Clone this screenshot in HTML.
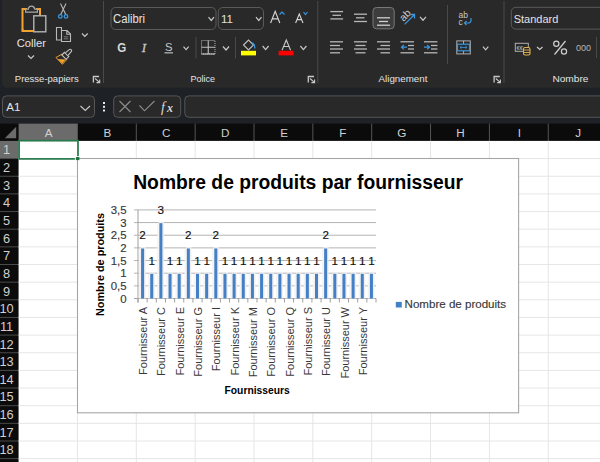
<!DOCTYPE html><html><head><meta charset="utf-8"><style>html,body{margin:0;padding:0;width:600px;height:462px;overflow:hidden;background:#1e2226;}svg{display:block;font-family:"Liberation Sans",sans-serif;}</style></head><body>
<svg width="600" height="462" viewBox="0 0 600 462">
<rect x="0" y="0" width="600" height="462" fill="#1e2226"/>
<rect x="2" y="-10" width="700" height="97.7" rx="5" fill="#292929"/>
<g stroke="#4a4a4a" stroke-width="1">
<line x1="103.5" y1="1" x2="103.5" y2="83"/>
<line x1="317.8" y1="1" x2="317.8" y2="83"/>
<line x1="504" y1="1" x2="504" y2="83"/>
<line x1="196" y1="37" x2="196" y2="58.5"/>
<line x1="235.5" y1="37" x2="235.5" y2="58.5"/>
<line x1="447.5" y1="5" x2="447.5" y2="64"/>
<line x1="596.5" y1="37" x2="596.5" y2="58"/>
</g>
<g fill="#e4e4e4" font-size="9.9">
<text x="14.8" y="82.4" textLength="64" lengthAdjust="spacingAndGlyphs">Presse-papiers</text>
<text x="190.5" y="82.4" textLength="24.6" lengthAdjust="spacingAndGlyphs">Police</text>
<text x="378.6" y="82.4" textLength="48.8" lengthAdjust="spacingAndGlyphs">Alignement</text>
<text x="552.4" y="82.4" textLength="36" lengthAdjust="spacingAndGlyphs">Nombre</text>
</g>
<path d="M22.5,30 V9 H27 M36 9 H40 V16" fill="none" stroke="#f2a32f" stroke-width="2"/>
<path d="M22.5,29 V31 H34" fill="none" stroke="#f2a32f" stroke-width="2"/>
<path d="M25.6,12.2 V9.2 H28.4 A3.1,3.1 0 0 1 34.6,9.2 H37.4 V12.2 Z" fill="#292929" stroke="#a8a8a8" stroke-width="1.2"/>
<rect x="33.8" y="15.8" width="12" height="16" fill="#292929" stroke="#b4b4b4" stroke-width="1.4"/>
<text x="16.7" y="47.3" font-size="11.2" fill="#e4e4e4" textLength="29.3" lengthAdjust="spacingAndGlyphs">Coller</text>
<polyline points="28.00,55.50 31.00,58.50 34.00,55.50" fill="none" stroke="#c8c8c8" stroke-width="1.2"/>
<path d="M60.5,3.5 L66,15 M66,3.5 L60.5,15" fill="none" stroke="#b8b8b8" stroke-width="1.1"/>
<circle cx="60.3" cy="16.4" r="1.8" fill="none" stroke="#3a96dd" stroke-width="1.3"/>
<circle cx="66" cy="16.4" r="1.8" fill="none" stroke="#3a96dd" stroke-width="1.3"/>
<path d="M61,40 H56.5 V27.5 H61.5 V30.5" fill="none" stroke="#b8b8b8" stroke-width="1.1"/>
<path d="M61.5,30.5 H67 L70.5,34 V41.5 H61.5 Z M66.8,30.5 V34.2 H70.5" fill="#292929" stroke="#b8b8b8" stroke-width="1.1"/>
<path d="M63.8,36.8 H68.2 M63.8,38.8 H68.2" stroke="#a0a0a0" stroke-width="0.7"/>
<polyline points="82.00,33.50 84.85,36.40 87.70,33.50" fill="none" stroke="#c8c8c8" stroke-width="1.2"/>
<path d="M56,57.5 L61.8,54.2 L67,59.2 L62.4,64.3 Z" fill="none" stroke="#f2a32f" stroke-width="1"/>
<path d="M57.8,59 L65.6,59.6 L62.3,63.6 Z" fill="#f2a32f"/>
<path d="M61.8,55 L64.5,52.3 L68.8,56.6 L66.1,59.3 Z" fill="#292929" stroke="#c4c4c4" stroke-width="1.1"/>
<path d="M65.6,52.6 L69.2,49.6 A1.3,1.3 0 0 1 71.2,51.6 L68.2,55.2" fill="#292929" stroke="#c4c4c4" stroke-width="1.1"/>
<path d="M92.90,76.50 H99.10 M93.40,76.00 V82.40" fill="none" stroke="#c8c8c8" stroke-width="1.3"/>
<path d="M95.10,78.50 L99.50,82.40 M99.70,79.40 V82.60 H96.50" fill="none" stroke="#c8c8c8" stroke-width="1.1"/>
<rect x="111.0" y="7.5" width="105.0" height="22" rx="4.5" fill="none" stroke="#5a5a5a" stroke-width="1"/>
<rect x="218.3" y="7.5" width="45.2" height="22" rx="4.5" fill="none" stroke="#5a5a5a" stroke-width="1"/>
<text x="113" y="23.1" font-size="12" fill="#e4e4e4" textLength="32" lengthAdjust="spacingAndGlyphs">Calibri</text>
<polyline points="208.50,17.20 211.25,20.50 214.00,17.20" fill="none" stroke="#c8c8c8" stroke-width="1.2"/>
<text x="221" y="23" font-size="11.5" fill="#e0e0e0">11</text>
<polyline points="256.00,17.20 258.75,20.50 261.50,17.20" fill="none" stroke="#c8c8c8" stroke-width="1.2"/>
<path d="M270.6,23 L275.2,11.3 L279.8,23 M272.3,18.8 H278.1" fill="none" stroke="#d4d4d4" stroke-width="1.15"/>
<polyline points="279.5,14.5 282,12 284.5,14.5" fill="none" stroke="#3a96dd" stroke-width="1.2"/>
<path d="M295.6,23 L299.3,14 L303,23 M297,19.6 H301.6" fill="none" stroke="#d4d4d4" stroke-width="1.1"/>
<polyline points="303.5,12 305.5,14.5 307.5,12" fill="none" stroke="#3a96dd" stroke-width="1.2"/>
<text x="117.2" y="51.7" font-size="12.5" font-weight="bold" fill="#d8d8d8" textLength="9" lengthAdjust="spacingAndGlyphs">G</text>
<text x="141.8" y="51.7" font-size="13" font-style="italic" fill="#c8c8c8" stroke="#c8c8c8" stroke-width="0.3" font-family="Liberation Serif">I</text>
<text x="165" y="51" font-size="11.5" fill="#c8c8c8" textLength="7.5" lengthAdjust="spacingAndGlyphs">S</text>
<rect x="164.5" y="52.3" width="8.5" height="1.1" fill="#c8c8c8"/>
<polyline points="183.50,46.70 186.10,49.70 188.70,46.70" fill="none" stroke="#c8c8c8" stroke-width="1.2"/>
<rect x="201.5" y="40.5" width="13.5" height="13.5" fill="none" stroke="#b0b0b0" stroke-width="1" stroke-dasharray="1,1"/>
<path d="M208.25,40.5 V54 M201.5,47.25 H215" stroke="#c0c0c0" stroke-width="1.1"/>
<path d="M201.5,54 H215" stroke="#c8c8c8" stroke-width="1.1"/>
<polyline points="223.00,46.50 226.00,50.00 229.00,46.50" fill="none" stroke="#c8c8c8" stroke-width="1.2"/>
<path d="M243.5,45 L248.5,40 L253.5,45 L248.5,50 Z" fill="none" stroke="#c0c0c0" stroke-width="1.1"/>
<path d="M252,43 Q255,44 254.8,48.5" fill="none" stroke="#3a96dd" stroke-width="1.4"/>
<rect x="241" y="50.8" width="15" height="4.6" fill="#ffff00"/>
<polyline points="262.60,46.00 265.60,49.60 268.60,46.00" fill="none" stroke="#c8c8c8" stroke-width="1.2"/>
<path d="M282,50.2 L286.3,40 L290.6,50.2 M283.6,46.5 H289" fill="none" stroke="#c8c8c8" stroke-width="1.1"/>
<rect x="278.6" y="50.8" width="15" height="4.6" fill="#ff0000"/>
<polyline points="300.40,46.00 303.40,49.60 306.40,46.00" fill="none" stroke="#c8c8c8" stroke-width="1.2"/>
<path d="M307.80,76.50 H314.00 M308.30,76.00 V82.40" fill="none" stroke="#c8c8c8" stroke-width="1.3"/>
<path d="M310.00,78.50 L314.40,82.40 M314.60,79.40 V82.60 H311.40" fill="none" stroke="#c8c8c8" stroke-width="1.1"/>
<line x1="330.3" y1="11.6" x2="343.1" y2="11.6" stroke="#b8b8b8" stroke-width="1.3"/>
<line x1="332.5" y1="15.3" x2="341.0" y2="15.3" stroke="#b8b8b8" stroke-width="1.3"/>
<line x1="330.3" y1="18.9" x2="343.1" y2="18.9" stroke="#b8b8b8" stroke-width="1.3"/>
<line x1="354.0" y1="14.2" x2="367.0" y2="14.2" stroke="#b8b8b8" stroke-width="1.3"/>
<line x1="356.0" y1="17.8" x2="364.5" y2="17.8" stroke="#b8b8b8" stroke-width="1.3"/>
<line x1="354.0" y1="21.5" x2="367.0" y2="21.5" stroke="#b8b8b8" stroke-width="1.3"/>
<rect x="373" y="7.5" width="21.2" height="21.3" rx="3.5" fill="#3d3d3d" stroke="#787878" stroke-width="1"/>
<line x1="377.0" y1="17.8" x2="390.0" y2="17.8" stroke="#d0d0d0" stroke-width="1.3"/>
<line x1="379.0" y1="21.5" x2="388.0" y2="21.5" stroke="#d0d0d0" stroke-width="1.3"/>
<line x1="377.0" y1="25.2" x2="390.0" y2="25.2" stroke="#d0d0d0" stroke-width="1.3"/>
<text transform="translate(403.4,21.9) rotate(-45)" font-size="10.5" fill="#c8c8c8">ab</text>
<path d="M404.6,24.4 L414.5,14.5 M410.5,14.5 H414.5 V18.5" fill="none" stroke="#3a96dd" stroke-width="1.3"/>
<polyline points="420.00,16.90 423.00,20.25 426.00,16.90" fill="none" stroke="#c8c8c8" stroke-width="1.2"/>
<line x1="330.0" y1="41.8" x2="343.0" y2="41.8" stroke="#b8b8b8" stroke-width="1.3"/>
<line x1="330.0" y1="45.5" x2="340.0" y2="45.5" stroke="#b8b8b8" stroke-width="1.3"/>
<line x1="330.0" y1="49.0" x2="343.0" y2="49.0" stroke="#b8b8b8" stroke-width="1.3"/>
<line x1="330.0" y1="52.8" x2="340.0" y2="52.8" stroke="#b8b8b8" stroke-width="1.3"/>
<line x1="354.0" y1="41.8" x2="367.0" y2="41.8" stroke="#b8b8b8" stroke-width="1.3"/>
<line x1="355.5" y1="45.5" x2="365.5" y2="45.5" stroke="#b8b8b8" stroke-width="1.3"/>
<line x1="354.0" y1="49.0" x2="367.0" y2="49.0" stroke="#b8b8b8" stroke-width="1.3"/>
<line x1="355.5" y1="52.8" x2="365.5" y2="52.8" stroke="#b8b8b8" stroke-width="1.3"/>
<line x1="377.0" y1="41.8" x2="390.0" y2="41.8" stroke="#b8b8b8" stroke-width="1.3"/>
<line x1="380.5" y1="45.5" x2="390.0" y2="45.5" stroke="#b8b8b8" stroke-width="1.3"/>
<line x1="377.0" y1="49.0" x2="390.0" y2="49.0" stroke="#b8b8b8" stroke-width="1.3"/>
<line x1="380.5" y1="52.8" x2="390.0" y2="52.8" stroke="#b8b8b8" stroke-width="1.3"/>
<line x1="400.5" y1="41.8" x2="414.0" y2="41.8" stroke="#b8b8b8" stroke-width="1.3"/>
<line x1="408.0" y1="45.5" x2="414.0" y2="45.5" stroke="#b8b8b8" stroke-width="1.3"/>
<line x1="408.0" y1="49.0" x2="414.0" y2="49.0" stroke="#b8b8b8" stroke-width="1.3"/>
<line x1="400.5" y1="52.8" x2="414.0" y2="52.8" stroke="#b8b8b8" stroke-width="1.3"/>
<path d="M407,47.2 H401.5 M403.8,45 L401.5,47.2 L403.8,49.4" fill="none" stroke="#3a96dd" stroke-width="1.2"/>
<line x1="424.0" y1="41.8" x2="437.4" y2="41.8" stroke="#b8b8b8" stroke-width="1.3"/>
<line x1="431.0" y1="45.5" x2="437.4" y2="45.5" stroke="#b8b8b8" stroke-width="1.3"/>
<line x1="431.0" y1="49.0" x2="437.4" y2="49.0" stroke="#b8b8b8" stroke-width="1.3"/>
<line x1="424.0" y1="52.8" x2="437.4" y2="52.8" stroke="#b8b8b8" stroke-width="1.3"/>
<path d="M424,47.2 H429.5 M427.2,45 L429.5,47.2 L427.2,49.4" fill="none" stroke="#3a96dd" stroke-width="1.2"/>
<text x="458.5" y="18" font-size="8.5" fill="#c8c8c8">ab</text>
<text x="458.5" y="24.5" font-size="8.5" fill="#c8c8c8">c</text>
<path d="M471,18 V20.5 Q471,23 468,23 H464.5 M466.5,21 L464.5,23 L466.5,25" fill="none" stroke="#3a96dd" stroke-width="1.2"/>
<rect x="456.8" y="40.9" width="13.5" height="13" fill="none" stroke="#b0b0b0" stroke-width="1"/>
<path d="M463.55,40.9 V44 M463.55,50.8 V53.9" stroke="#b0b0b0" stroke-width="1"/>
<rect x="457.5" y="44.2" width="12" height="6.6" fill="none" stroke="#3a96dd" stroke-width="1.2"/>
<path d="M460,47.4 H467 M461.6,45.9 L460,47.4 L461.6,48.9 M465.4,45.9 L467,47.4 L465.4,48.9" fill="none" stroke="#3a96dd" stroke-width="0.9"/>
<polyline points="483.00,46.70 485.65,49.90 488.30,46.70" fill="none" stroke="#c8c8c8" stroke-width="1.2"/>
<path d="M493.60,76.50 H499.80 M494.10,76.00 V82.40" fill="none" stroke="#c8c8c8" stroke-width="1.3"/>
<path d="M495.80,78.50 L500.20,82.40 M500.40,79.40 V82.60 H497.20" fill="none" stroke="#c8c8c8" stroke-width="1.1"/>
<rect x="511.3" y="7.3" width="200" height="21.8" rx="4.5" fill="none" stroke="#5a5a5a" stroke-width="1"/>
<text x="513.7" y="23" font-size="11.6" fill="#e4e4e4" textLength="44.6" lengthAdjust="spacingAndGlyphs">Standard</text>
<rect x="515.3" y="43.3" width="13" height="8" fill="none" stroke="#b0b0b0" stroke-width="1"/>
<text x="516.5" y="50" font-size="6" fill="#b0b0b0">€€</text>
<rect x="523.5" y="47.5" width="6.5" height="7.5" rx="1.5" fill="#292929" stroke="#e0b050" stroke-width="1.1"/>
<path d="M523.5,50 H530 M523.5,52.5 H530" stroke="#e0b050" stroke-width="0.9"/>
<polyline points="537.00,47.00 539.75,49.50 542.50,47.00" fill="none" stroke="#c8c8c8" stroke-width="1.2"/>
<circle cx="556.3" cy="43.8" r="2.6" fill="none" stroke="#d0d0d0" stroke-width="1.2"/>
<circle cx="564" cy="51.5" r="2.6" fill="none" stroke="#d0d0d0" stroke-width="1.2"/>
<path d="M565.5,41 L554.5,54.5" stroke="#d0d0d0" stroke-width="1.2"/>
<text x="576" y="50.7" font-size="9" fill="#b8b8b8" textLength="15" lengthAdjust="spacingAndGlyphs">000</text>
<text x="552" y="82.7" font-size="9.4" fill="#e4e4e4"></text>
<rect x="2.5" y="95.9" width="92" height="21.4" rx="4" fill="#292929" stroke="#555" stroke-width="1"/>
<rect x="113.7" y="95.9" width="67" height="21.4" rx="4" fill="#292929" stroke="#555" stroke-width="1"/>
<rect x="184.8" y="95.9" width="500" height="21.4" rx="4" fill="#292929" stroke="#555" stroke-width="1"/>
<text x="6.3" y="111.2" fill="#e4e4e4" font-size="11.5">A1</text>
<polyline points="80.50,106.00 85.25,110.50 90.00,106.00" fill="none" stroke="#c8c8c8" stroke-width="1.1"/>
<rect x="103" y="102.0" width="2" height="2" fill="#e8e8e8"/>
<rect x="103" y="105.8" width="2" height="2" fill="#e8e8e8"/>
<rect x="103" y="109.5" width="2" height="2" fill="#e8e8e8"/>
<path d="M119.5,101 L130.5,112 M130.5,101 L119.5,112" stroke="#8c8c8c" stroke-width="1.1"/>
<path d="M139.5,105.5 L144.5,110.8 L154.5,101" fill="none" stroke="#8c8c8c" stroke-width="1.1"/>
<text x="161" y="112" font-size="14" font-style="italic" font-family="Liberation Serif" fill="#d8d8d8">f</text>
<text x="167" y="112" font-size="12" font-style="italic" font-family="Liberation Serif" fill="#d8d8d8" font-weight="bold">x</text>
<rect x="0" y="123.6" width="600" height="17.30000000000001" fill="#0b0b0b"/>
<rect x="18.6" y="123.6" width="58.85" height="17.30000000000001" fill="#6b6b6b"/>
<polygon points="16.2,126.7 16.2,138.2 4.8,138.2" fill="#6b6b6b"/>
<rect x="0" y="140.9" width="18.6" height="400" fill="#0b0b0b"/>
<rect x="0" y="140.9" width="18.6" height="17.69999999999999" fill="#6b6b6b"/>
<line x1="77.45" y1="123.6" x2="77.45" y2="140.9" stroke="#555555" stroke-width="1"/>
<line x1="136.30" y1="123.6" x2="136.30" y2="140.9" stroke="#555555" stroke-width="1"/>
<line x1="195.15" y1="123.6" x2="195.15" y2="140.9" stroke="#555555" stroke-width="1"/>
<line x1="254.00" y1="123.6" x2="254.00" y2="140.9" stroke="#555555" stroke-width="1"/>
<line x1="312.85" y1="123.6" x2="312.85" y2="140.9" stroke="#555555" stroke-width="1"/>
<line x1="371.70" y1="123.6" x2="371.70" y2="140.9" stroke="#555555" stroke-width="1"/>
<line x1="430.55" y1="123.6" x2="430.55" y2="140.9" stroke="#555555" stroke-width="1"/>
<line x1="489.40" y1="123.6" x2="489.40" y2="140.9" stroke="#555555" stroke-width="1"/>
<line x1="548.25" y1="123.6" x2="548.25" y2="140.9" stroke="#555555" stroke-width="1"/>
<line x1="607.10" y1="123.6" x2="607.10" y2="140.9" stroke="#555555" stroke-width="1"/>
<text x="48.63" y="136.7" fill="#d0d0d0" font-size="11.7" text-anchor="middle">A</text>
<text x="107.47" y="136.7" fill="#d0d0d0" font-size="11.7" text-anchor="middle">B</text>
<text x="166.32" y="136.7" fill="#d0d0d0" font-size="11.7" text-anchor="middle">C</text>
<text x="225.17" y="136.7" fill="#d0d0d0" font-size="11.7" text-anchor="middle">D</text>
<text x="284.03" y="136.7" fill="#d0d0d0" font-size="11.7" text-anchor="middle">E</text>
<text x="342.88" y="136.7" fill="#d0d0d0" font-size="11.7" text-anchor="middle">F</text>
<text x="401.73" y="136.7" fill="#d0d0d0" font-size="11.7" text-anchor="middle">G</text>
<text x="460.58" y="136.7" fill="#d0d0d0" font-size="11.7" text-anchor="middle">H</text>
<text x="519.43" y="136.7" fill="#d0d0d0" font-size="11.7" text-anchor="middle">I</text>
<text x="578.28" y="136.7" fill="#d0d0d0" font-size="11.7" text-anchor="middle">J</text>
<text x="6.6" y="154.37" fill="#d0d0d0" font-size="12.8" text-anchor="middle">1</text>
<line x1="0" y1="158.60" x2="18.6" y2="158.60" stroke="#4a4a4a" stroke-width="1"/>
<text x="6.6" y="172.02" fill="#d0d0d0" font-size="12.8" text-anchor="middle">2</text>
<line x1="0" y1="176.25" x2="18.6" y2="176.25" stroke="#4a4a4a" stroke-width="1"/>
<text x="6.6" y="189.67" fill="#d0d0d0" font-size="12.8" text-anchor="middle">3</text>
<line x1="0" y1="193.90" x2="18.6" y2="193.90" stroke="#4a4a4a" stroke-width="1"/>
<text x="6.6" y="207.32" fill="#d0d0d0" font-size="12.8" text-anchor="middle">4</text>
<line x1="0" y1="211.55" x2="18.6" y2="211.55" stroke="#4a4a4a" stroke-width="1"/>
<text x="6.6" y="224.97" fill="#d0d0d0" font-size="12.8" text-anchor="middle">5</text>
<line x1="0" y1="229.20" x2="18.6" y2="229.20" stroke="#4a4a4a" stroke-width="1"/>
<text x="6.6" y="242.62" fill="#d0d0d0" font-size="12.8" text-anchor="middle">6</text>
<line x1="0" y1="246.85" x2="18.6" y2="246.85" stroke="#4a4a4a" stroke-width="1"/>
<text x="6.6" y="260.27" fill="#d0d0d0" font-size="12.8" text-anchor="middle">7</text>
<line x1="0" y1="264.50" x2="18.6" y2="264.50" stroke="#4a4a4a" stroke-width="1"/>
<text x="6.6" y="277.93" fill="#d0d0d0" font-size="12.8" text-anchor="middle">8</text>
<line x1="0" y1="282.15" x2="18.6" y2="282.15" stroke="#4a4a4a" stroke-width="1"/>
<text x="6.6" y="295.57" fill="#d0d0d0" font-size="12.8" text-anchor="middle">9</text>
<line x1="0" y1="299.80" x2="18.6" y2="299.80" stroke="#4a4a4a" stroke-width="1"/>
<text x="6.6" y="313.22" fill="#d0d0d0" font-size="12.8" text-anchor="middle">10</text>
<line x1="0" y1="317.45" x2="18.6" y2="317.45" stroke="#4a4a4a" stroke-width="1"/>
<text x="6.6" y="330.88" fill="#d0d0d0" font-size="12.8" text-anchor="middle">11</text>
<line x1="0" y1="335.10" x2="18.6" y2="335.10" stroke="#4a4a4a" stroke-width="1"/>
<text x="6.6" y="348.53" fill="#d0d0d0" font-size="12.8" text-anchor="middle">12</text>
<line x1="0" y1="352.75" x2="18.6" y2="352.75" stroke="#4a4a4a" stroke-width="1"/>
<text x="6.6" y="366.18" fill="#d0d0d0" font-size="12.8" text-anchor="middle">13</text>
<line x1="0" y1="370.40" x2="18.6" y2="370.40" stroke="#4a4a4a" stroke-width="1"/>
<text x="6.6" y="383.82" fill="#d0d0d0" font-size="12.8" text-anchor="middle">14</text>
<line x1="0" y1="388.05" x2="18.6" y2="388.05" stroke="#4a4a4a" stroke-width="1"/>
<text x="6.6" y="401.47" fill="#d0d0d0" font-size="12.8" text-anchor="middle">15</text>
<line x1="0" y1="405.70" x2="18.6" y2="405.70" stroke="#4a4a4a" stroke-width="1"/>
<text x="6.6" y="419.12" fill="#d0d0d0" font-size="12.8" text-anchor="middle">16</text>
<line x1="0" y1="423.35" x2="18.6" y2="423.35" stroke="#4a4a4a" stroke-width="1"/>
<text x="6.6" y="436.78" fill="#d0d0d0" font-size="12.8" text-anchor="middle">17</text>
<line x1="0" y1="441.00" x2="18.6" y2="441.00" stroke="#4a4a4a" stroke-width="1"/>
<text x="6.6" y="454.43" fill="#d0d0d0" font-size="12.8" text-anchor="middle">18</text>
<line x1="0" y1="458.65" x2="18.6" y2="458.65" stroke="#4a4a4a" stroke-width="1"/>
<text x="6.6" y="472.07" fill="#d0d0d0" font-size="12.8" text-anchor="middle">19</text>
<rect x="18.6" y="140.9" width="600" height="400" fill="#ffffff"/>
<line x1="77.45" y1="140.9" x2="77.45" y2="462" stroke="#e6e6e6" stroke-width="1"/>
<line x1="136.30" y1="140.9" x2="136.30" y2="462" stroke="#e6e6e6" stroke-width="1"/>
<line x1="195.15" y1="140.9" x2="195.15" y2="462" stroke="#e6e6e6" stroke-width="1"/>
<line x1="254.00" y1="140.9" x2="254.00" y2="462" stroke="#e6e6e6" stroke-width="1"/>
<line x1="312.85" y1="140.9" x2="312.85" y2="462" stroke="#e6e6e6" stroke-width="1"/>
<line x1="371.70" y1="140.9" x2="371.70" y2="462" stroke="#e6e6e6" stroke-width="1"/>
<line x1="430.55" y1="140.9" x2="430.55" y2="462" stroke="#e6e6e6" stroke-width="1"/>
<line x1="489.40" y1="140.9" x2="489.40" y2="462" stroke="#e6e6e6" stroke-width="1"/>
<line x1="548.25" y1="140.9" x2="548.25" y2="462" stroke="#e6e6e6" stroke-width="1"/>
<line x1="607.10" y1="140.9" x2="607.10" y2="462" stroke="#e6e6e6" stroke-width="1"/>
<line x1="18.6" y1="158.60" x2="600" y2="158.60" stroke="#e6e6e6" stroke-width="1"/>
<line x1="18.6" y1="176.25" x2="600" y2="176.25" stroke="#e6e6e6" stroke-width="1"/>
<line x1="18.6" y1="193.90" x2="600" y2="193.90" stroke="#e6e6e6" stroke-width="1"/>
<line x1="18.6" y1="211.55" x2="600" y2="211.55" stroke="#e6e6e6" stroke-width="1"/>
<line x1="18.6" y1="229.20" x2="600" y2="229.20" stroke="#e6e6e6" stroke-width="1"/>
<line x1="18.6" y1="246.85" x2="600" y2="246.85" stroke="#e6e6e6" stroke-width="1"/>
<line x1="18.6" y1="264.50" x2="600" y2="264.50" stroke="#e6e6e6" stroke-width="1"/>
<line x1="18.6" y1="282.15" x2="600" y2="282.15" stroke="#e6e6e6" stroke-width="1"/>
<line x1="18.6" y1="299.80" x2="600" y2="299.80" stroke="#e6e6e6" stroke-width="1"/>
<line x1="18.6" y1="317.45" x2="600" y2="317.45" stroke="#e6e6e6" stroke-width="1"/>
<line x1="18.6" y1="335.10" x2="600" y2="335.10" stroke="#e6e6e6" stroke-width="1"/>
<line x1="18.6" y1="352.75" x2="600" y2="352.75" stroke="#e6e6e6" stroke-width="1"/>
<line x1="18.6" y1="370.40" x2="600" y2="370.40" stroke="#e6e6e6" stroke-width="1"/>
<line x1="18.6" y1="388.05" x2="600" y2="388.05" stroke="#e6e6e6" stroke-width="1"/>
<line x1="18.6" y1="405.70" x2="600" y2="405.70" stroke="#e6e6e6" stroke-width="1"/>
<line x1="18.6" y1="423.35" x2="600" y2="423.35" stroke="#e6e6e6" stroke-width="1"/>
<line x1="18.6" y1="441.00" x2="600" y2="441.00" stroke="#e6e6e6" stroke-width="1"/>
<line x1="18.6" y1="458.65" x2="600" y2="458.65" stroke="#e6e6e6" stroke-width="1"/>
<rect x="77.5" y="158.5" width="441.1" height="254.3" fill="#ffffff" stroke="#a6a6a6" stroke-width="1.1"/>
<text x="133.2" y="189" font-size="20" font-weight="bold" fill="#000" textLength="329.8" lengthAdjust="spacingAndGlyphs">Nombre de produits par fournisseur</text>
<line x1="134" y1="285.85" x2="376.00" y2="285.85" stroke="#b4b4b4" stroke-width="1"/>
<line x1="134" y1="273.19" x2="376.00" y2="273.19" stroke="#b4b4b4" stroke-width="1"/>
<line x1="134" y1="260.54" x2="376.00" y2="260.54" stroke="#b4b4b4" stroke-width="1"/>
<line x1="134" y1="247.88" x2="376.00" y2="247.88" stroke="#b4b4b4" stroke-width="1"/>
<line x1="134" y1="235.22" x2="376.00" y2="235.22" stroke="#b4b4b4" stroke-width="1"/>
<line x1="134" y1="222.57" x2="376.00" y2="222.57" stroke="#b4b4b4" stroke-width="1"/>
<line x1="134" y1="209.92" x2="376.00" y2="209.92" stroke="#b4b4b4" stroke-width="1"/>
<line x1="138.00" y1="209.92" x2="138.00" y2="302.50" stroke="#a0a0a0" stroke-width="1"/>
<line x1="134" y1="298.50" x2="376.00" y2="298.50" stroke="#a0a0a0" stroke-width="1"/>
<line x1="138.00" y1="298.50" x2="138.00" y2="302.50" stroke="#a0a0a0" stroke-width="1"/>
<line x1="147.15" y1="298.50" x2="147.15" y2="302.50" stroke="#a0a0a0" stroke-width="1"/>
<line x1="156.31" y1="298.50" x2="156.31" y2="302.50" stroke="#a0a0a0" stroke-width="1"/>
<line x1="165.46" y1="298.50" x2="165.46" y2="302.50" stroke="#a0a0a0" stroke-width="1"/>
<line x1="174.62" y1="298.50" x2="174.62" y2="302.50" stroke="#a0a0a0" stroke-width="1"/>
<line x1="183.77" y1="298.50" x2="183.77" y2="302.50" stroke="#a0a0a0" stroke-width="1"/>
<line x1="192.92" y1="298.50" x2="192.92" y2="302.50" stroke="#a0a0a0" stroke-width="1"/>
<line x1="202.08" y1="298.50" x2="202.08" y2="302.50" stroke="#a0a0a0" stroke-width="1"/>
<line x1="211.23" y1="298.50" x2="211.23" y2="302.50" stroke="#a0a0a0" stroke-width="1"/>
<line x1="220.38" y1="298.50" x2="220.38" y2="302.50" stroke="#a0a0a0" stroke-width="1"/>
<line x1="229.54" y1="298.50" x2="229.54" y2="302.50" stroke="#a0a0a0" stroke-width="1"/>
<line x1="238.69" y1="298.50" x2="238.69" y2="302.50" stroke="#a0a0a0" stroke-width="1"/>
<line x1="247.85" y1="298.50" x2="247.85" y2="302.50" stroke="#a0a0a0" stroke-width="1"/>
<line x1="257.00" y1="298.50" x2="257.00" y2="302.50" stroke="#a0a0a0" stroke-width="1"/>
<line x1="266.15" y1="298.50" x2="266.15" y2="302.50" stroke="#a0a0a0" stroke-width="1"/>
<line x1="275.31" y1="298.50" x2="275.31" y2="302.50" stroke="#a0a0a0" stroke-width="1"/>
<line x1="284.46" y1="298.50" x2="284.46" y2="302.50" stroke="#a0a0a0" stroke-width="1"/>
<line x1="293.62" y1="298.50" x2="293.62" y2="302.50" stroke="#a0a0a0" stroke-width="1"/>
<line x1="302.77" y1="298.50" x2="302.77" y2="302.50" stroke="#a0a0a0" stroke-width="1"/>
<line x1="311.92" y1="298.50" x2="311.92" y2="302.50" stroke="#a0a0a0" stroke-width="1"/>
<line x1="321.08" y1="298.50" x2="321.08" y2="302.50" stroke="#a0a0a0" stroke-width="1"/>
<line x1="330.23" y1="298.50" x2="330.23" y2="302.50" stroke="#a0a0a0" stroke-width="1"/>
<line x1="339.38" y1="298.50" x2="339.38" y2="302.50" stroke="#a0a0a0" stroke-width="1"/>
<line x1="348.54" y1="298.50" x2="348.54" y2="302.50" stroke="#a0a0a0" stroke-width="1"/>
<line x1="357.69" y1="298.50" x2="357.69" y2="302.50" stroke="#a0a0a0" stroke-width="1"/>
<line x1="366.85" y1="298.50" x2="366.85" y2="302.50" stroke="#a0a0a0" stroke-width="1"/>
<line x1="376.00" y1="298.50" x2="376.00" y2="302.50" stroke="#a0a0a0" stroke-width="1"/>
<rect x="140.38" y="247.08" width="5.2" height="51.42" fill="#eeeeee"/>
<rect x="138.78" y="248.88" width="1.6" height="49.62" fill="#f4f4f4"/>
<rect x="149.53" y="272.39" width="5.2" height="26.11" fill="#eeeeee"/>
<rect x="147.93" y="274.19" width="1.6" height="24.31" fill="#f4f4f4"/>
<rect x="158.68" y="221.77" width="5.2" height="76.73" fill="#eeeeee"/>
<rect x="157.08" y="223.57" width="1.6" height="74.93" fill="#f4f4f4"/>
<rect x="167.84" y="272.39" width="5.2" height="26.11" fill="#eeeeee"/>
<rect x="166.24" y="274.19" width="1.6" height="24.31" fill="#f4f4f4"/>
<rect x="176.99" y="272.39" width="5.2" height="26.11" fill="#eeeeee"/>
<rect x="175.39" y="274.19" width="1.6" height="24.31" fill="#f4f4f4"/>
<rect x="186.15" y="247.08" width="5.2" height="51.42" fill="#eeeeee"/>
<rect x="184.55" y="248.88" width="1.6" height="49.62" fill="#f4f4f4"/>
<rect x="195.30" y="272.39" width="5.2" height="26.11" fill="#eeeeee"/>
<rect x="193.70" y="274.19" width="1.6" height="24.31" fill="#f4f4f4"/>
<rect x="204.45" y="272.39" width="5.2" height="26.11" fill="#eeeeee"/>
<rect x="202.85" y="274.19" width="1.6" height="24.31" fill="#f4f4f4"/>
<rect x="213.61" y="247.08" width="5.2" height="51.42" fill="#eeeeee"/>
<rect x="212.01" y="248.88" width="1.6" height="49.62" fill="#f4f4f4"/>
<rect x="222.76" y="272.39" width="5.2" height="26.11" fill="#eeeeee"/>
<rect x="221.16" y="274.19" width="1.6" height="24.31" fill="#f4f4f4"/>
<rect x="231.92" y="272.39" width="5.2" height="26.11" fill="#eeeeee"/>
<rect x="230.32" y="274.19" width="1.6" height="24.31" fill="#f4f4f4"/>
<rect x="241.07" y="272.39" width="5.2" height="26.11" fill="#eeeeee"/>
<rect x="239.47" y="274.19" width="1.6" height="24.31" fill="#f4f4f4"/>
<rect x="250.22" y="272.39" width="5.2" height="26.11" fill="#eeeeee"/>
<rect x="248.62" y="274.19" width="1.6" height="24.31" fill="#f4f4f4"/>
<rect x="259.38" y="272.39" width="5.2" height="26.11" fill="#eeeeee"/>
<rect x="257.78" y="274.19" width="1.6" height="24.31" fill="#f4f4f4"/>
<rect x="268.53" y="272.39" width="5.2" height="26.11" fill="#eeeeee"/>
<rect x="266.93" y="274.19" width="1.6" height="24.31" fill="#f4f4f4"/>
<rect x="277.68" y="272.39" width="5.2" height="26.11" fill="#eeeeee"/>
<rect x="276.08" y="274.19" width="1.6" height="24.31" fill="#f4f4f4"/>
<rect x="286.84" y="272.39" width="5.2" height="26.11" fill="#eeeeee"/>
<rect x="285.24" y="274.19" width="1.6" height="24.31" fill="#f4f4f4"/>
<rect x="295.99" y="272.39" width="5.2" height="26.11" fill="#eeeeee"/>
<rect x="294.39" y="274.19" width="1.6" height="24.31" fill="#f4f4f4"/>
<rect x="305.15" y="272.39" width="5.2" height="26.11" fill="#eeeeee"/>
<rect x="303.55" y="274.19" width="1.6" height="24.31" fill="#f4f4f4"/>
<rect x="314.30" y="272.39" width="5.2" height="26.11" fill="#eeeeee"/>
<rect x="312.70" y="274.19" width="1.6" height="24.31" fill="#f4f4f4"/>
<rect x="323.45" y="247.08" width="5.2" height="51.42" fill="#eeeeee"/>
<rect x="321.85" y="248.88" width="1.6" height="49.62" fill="#f4f4f4"/>
<rect x="332.61" y="272.39" width="5.2" height="26.11" fill="#eeeeee"/>
<rect x="331.01" y="274.19" width="1.6" height="24.31" fill="#f4f4f4"/>
<rect x="341.76" y="272.39" width="5.2" height="26.11" fill="#eeeeee"/>
<rect x="340.16" y="274.19" width="1.6" height="24.31" fill="#f4f4f4"/>
<rect x="350.92" y="272.39" width="5.2" height="26.11" fill="#eeeeee"/>
<rect x="349.32" y="274.19" width="1.6" height="24.31" fill="#f4f4f4"/>
<rect x="360.07" y="272.39" width="5.2" height="26.11" fill="#eeeeee"/>
<rect x="358.47" y="274.19" width="1.6" height="24.31" fill="#f4f4f4"/>
<rect x="369.22" y="272.39" width="5.2" height="26.11" fill="#eeeeee"/>
<rect x="367.62" y="274.19" width="1.6" height="24.31" fill="#f4f4f4"/>
<text x="126.5" y="302.50" font-size="11.4" fill="#383838" stroke="#383838" stroke-width="0.15" text-anchor="end">0</text>
<text x="126.5" y="289.85" font-size="11.4" fill="#383838" stroke="#383838" stroke-width="0.15" text-anchor="end">0,5</text>
<text x="126.5" y="277.19" font-size="11.4" fill="#383838" stroke="#383838" stroke-width="0.15" text-anchor="end">1</text>
<text x="126.5" y="264.54" font-size="11.4" fill="#383838" stroke="#383838" stroke-width="0.15" text-anchor="end">1,5</text>
<text x="126.5" y="251.88" font-size="11.4" fill="#383838" stroke="#383838" stroke-width="0.15" text-anchor="end">2</text>
<text x="126.5" y="239.22" font-size="11.4" fill="#383838" stroke="#383838" stroke-width="0.15" text-anchor="end">2,5</text>
<text x="126.5" y="226.57" font-size="11.4" fill="#383838" stroke="#383838" stroke-width="0.15" text-anchor="end">3</text>
<text x="126.5" y="213.92" font-size="11.4" fill="#383838" stroke="#383838" stroke-width="0.15" text-anchor="end">3,5</text>
<rect x="141.08" y="248.48" width="3" height="50.02" fill="#4580c6"/>
<text x="142.58" y="239.38" font-size="11.7" fill="#111" stroke="#111" stroke-width="0.15" text-anchor="middle">2</text>
<rect x="150.23" y="273.79" width="3" height="24.71" fill="#4580c6"/>
<text x="151.73" y="264.69" font-size="11.7" fill="#111" stroke="#111" stroke-width="0.15" text-anchor="middle">1</text>
<rect x="159.38" y="223.17" width="3" height="75.33" fill="#4580c6"/>
<text x="160.88" y="214.07" font-size="11.7" fill="#111" stroke="#111" stroke-width="0.15" text-anchor="middle">3</text>
<rect x="168.54" y="273.79" width="3" height="24.71" fill="#4580c6"/>
<text x="170.04" y="264.69" font-size="11.7" fill="#111" stroke="#111" stroke-width="0.15" text-anchor="middle">1</text>
<rect x="177.69" y="273.79" width="3" height="24.71" fill="#4580c6"/>
<text x="179.19" y="264.69" font-size="11.7" fill="#111" stroke="#111" stroke-width="0.15" text-anchor="middle">1</text>
<rect x="186.85" y="248.48" width="3" height="50.02" fill="#4580c6"/>
<text x="188.35" y="239.38" font-size="11.7" fill="#111" stroke="#111" stroke-width="0.15" text-anchor="middle">2</text>
<rect x="196.00" y="273.79" width="3" height="24.71" fill="#4580c6"/>
<text x="197.50" y="264.69" font-size="11.7" fill="#111" stroke="#111" stroke-width="0.15" text-anchor="middle">1</text>
<rect x="205.15" y="273.79" width="3" height="24.71" fill="#4580c6"/>
<text x="206.65" y="264.69" font-size="11.7" fill="#111" stroke="#111" stroke-width="0.15" text-anchor="middle">1</text>
<rect x="214.31" y="248.48" width="3" height="50.02" fill="#4580c6"/>
<text x="215.81" y="239.38" font-size="11.7" fill="#111" stroke="#111" stroke-width="0.15" text-anchor="middle">2</text>
<rect x="223.46" y="273.79" width="3" height="24.71" fill="#4580c6"/>
<text x="224.96" y="264.69" font-size="11.7" fill="#111" stroke="#111" stroke-width="0.15" text-anchor="middle">1</text>
<rect x="232.62" y="273.79" width="3" height="24.71" fill="#4580c6"/>
<text x="234.12" y="264.69" font-size="11.7" fill="#111" stroke="#111" stroke-width="0.15" text-anchor="middle">1</text>
<rect x="241.77" y="273.79" width="3" height="24.71" fill="#4580c6"/>
<text x="243.27" y="264.69" font-size="11.7" fill="#111" stroke="#111" stroke-width="0.15" text-anchor="middle">1</text>
<rect x="250.92" y="273.79" width="3" height="24.71" fill="#4580c6"/>
<text x="252.42" y="264.69" font-size="11.7" fill="#111" stroke="#111" stroke-width="0.15" text-anchor="middle">1</text>
<rect x="260.08" y="273.79" width="3" height="24.71" fill="#4580c6"/>
<text x="261.58" y="264.69" font-size="11.7" fill="#111" stroke="#111" stroke-width="0.15" text-anchor="middle">1</text>
<rect x="269.23" y="273.79" width="3" height="24.71" fill="#4580c6"/>
<text x="270.73" y="264.69" font-size="11.7" fill="#111" stroke="#111" stroke-width="0.15" text-anchor="middle">1</text>
<rect x="278.38" y="273.79" width="3" height="24.71" fill="#4580c6"/>
<text x="279.88" y="264.69" font-size="11.7" fill="#111" stroke="#111" stroke-width="0.15" text-anchor="middle">1</text>
<rect x="287.54" y="273.79" width="3" height="24.71" fill="#4580c6"/>
<text x="289.04" y="264.69" font-size="11.7" fill="#111" stroke="#111" stroke-width="0.15" text-anchor="middle">1</text>
<rect x="296.69" y="273.79" width="3" height="24.71" fill="#4580c6"/>
<text x="298.19" y="264.69" font-size="11.7" fill="#111" stroke="#111" stroke-width="0.15" text-anchor="middle">1</text>
<rect x="305.85" y="273.79" width="3" height="24.71" fill="#4580c6"/>
<text x="307.35" y="264.69" font-size="11.7" fill="#111" stroke="#111" stroke-width="0.15" text-anchor="middle">1</text>
<rect x="315.00" y="273.79" width="3" height="24.71" fill="#4580c6"/>
<text x="316.50" y="264.69" font-size="11.7" fill="#111" stroke="#111" stroke-width="0.15" text-anchor="middle">1</text>
<rect x="324.15" y="248.48" width="3" height="50.02" fill="#4580c6"/>
<text x="325.65" y="239.38" font-size="11.7" fill="#111" stroke="#111" stroke-width="0.15" text-anchor="middle">2</text>
<rect x="333.31" y="273.79" width="3" height="24.71" fill="#4580c6"/>
<text x="334.81" y="264.69" font-size="11.7" fill="#111" stroke="#111" stroke-width="0.15" text-anchor="middle">1</text>
<rect x="342.46" y="273.79" width="3" height="24.71" fill="#4580c6"/>
<text x="343.96" y="264.69" font-size="11.7" fill="#111" stroke="#111" stroke-width="0.15" text-anchor="middle">1</text>
<rect x="351.62" y="273.79" width="3" height="24.71" fill="#4580c6"/>
<text x="353.12" y="264.69" font-size="11.7" fill="#111" stroke="#111" stroke-width="0.15" text-anchor="middle">1</text>
<rect x="360.77" y="273.79" width="3" height="24.71" fill="#4580c6"/>
<text x="362.27" y="264.69" font-size="11.7" fill="#111" stroke="#111" stroke-width="0.15" text-anchor="middle">1</text>
<rect x="369.92" y="273.79" width="3" height="24.71" fill="#4580c6"/>
<text x="371.42" y="264.69" font-size="11.7" fill="#111" stroke="#111" stroke-width="0.15" text-anchor="middle">1</text>
<text transform="translate(147.18,307) rotate(-90)" font-size="11" fill="#383838" text-anchor="end">Fournisseur A</text>
<text transform="translate(165.48,307) rotate(-90)" font-size="11" fill="#383838" text-anchor="end">Fournisseur C</text>
<text transform="translate(183.79,307) rotate(-90)" font-size="11" fill="#383838" text-anchor="end">Fournisseur E</text>
<text transform="translate(202.10,307) rotate(-90)" font-size="11" fill="#383838" text-anchor="end">Fournisseur G</text>
<text transform="translate(220.41,307) rotate(-90)" font-size="11" fill="#383838" text-anchor="end">Fournisseur I</text>
<text transform="translate(238.72,307) rotate(-90)" font-size="11" fill="#383838" text-anchor="end">Fournisseur K</text>
<text transform="translate(257.02,307) rotate(-90)" font-size="11" fill="#383838" text-anchor="end">Fournisseur M</text>
<text transform="translate(275.33,307) rotate(-90)" font-size="11" fill="#383838" text-anchor="end">Fournisseur O</text>
<text transform="translate(293.64,307) rotate(-90)" font-size="11" fill="#383838" text-anchor="end">Fournisseur Q</text>
<text transform="translate(311.95,307) rotate(-90)" font-size="11" fill="#383838" text-anchor="end">Fournisseur S</text>
<text transform="translate(330.25,307) rotate(-90)" font-size="11" fill="#383838" text-anchor="end">Fournisseur U</text>
<text transform="translate(348.56,307) rotate(-90)" font-size="11" fill="#383838" text-anchor="end">Fournisseur W</text>
<text transform="translate(366.87,307) rotate(-90)" font-size="11" fill="#383838" text-anchor="end">Fournisseur Y</text>
<text x="224.5" y="394.3" font-size="10.3" font-weight="bold" fill="#000" textLength="65.3" lengthAdjust="spacingAndGlyphs">Fournisseurs</text>
<text transform="translate(104.3,316) rotate(-90)" font-size="11.5" font-weight="bold" fill="#000" textLength="103" lengthAdjust="spacingAndGlyphs">Nombre de produits</text>
<rect x="395.8" y="301.9" width="6" height="5.6" fill="#4580c6"/>
<text x="404.6" y="308.3" font-size="11.6" fill="#383838" stroke="#383838" stroke-width="0.15" textLength="101.5" lengthAdjust="spacingAndGlyphs">Nombre de produits</text>
<rect x="19.1" y="140.7" width="58.9" height="18.2" fill="none" stroke="#267a4b" stroke-width="1.7"/>
<rect x="74.9" y="156.2" width="5" height="0.9" fill="#ffffff"/>
<rect x="74.9" y="156.2" width="1" height="4.6" fill="#ffffff"/>
<rect x="75.9" y="157.1" width="3.5" height="3" fill="#1f6e40"/>
</svg></body></html>
